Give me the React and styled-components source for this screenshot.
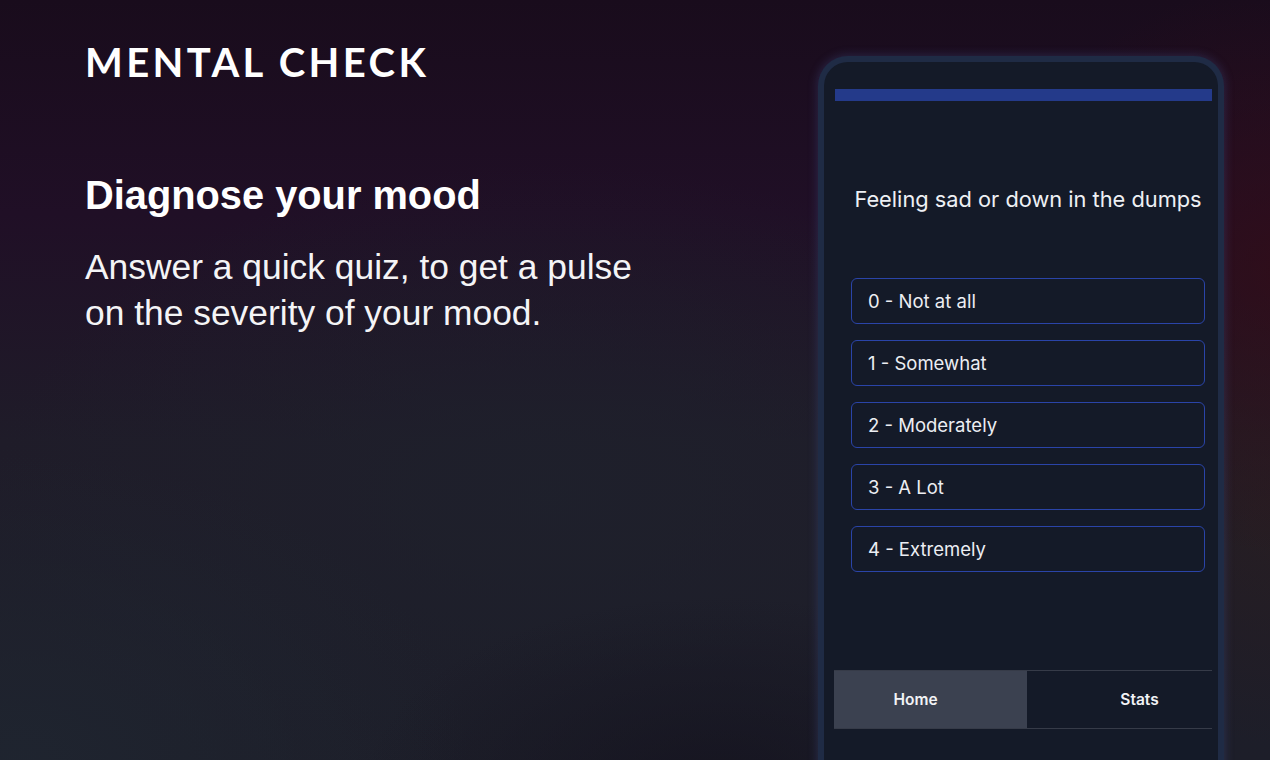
import React from "react";
import styled, { createGlobalStyle } from "styled-components";

const GlobalStyle = createGlobalStyle`
  html, body {
    margin: 0;
    padding: 0;
    height: 100%;
    overflow: hidden;
  }
  #root {
    height: 100%;
  }
`;

const Page = styled.div`
  width: 1270px;
  height: 760px;
  overflow: hidden;
  display: flex;
  justify-content: space-between;
  background:
    radial-gradient(ellipse 420px 380px at 1290px 270px, rgba(52, 12, 22, 0.75), transparent 75%),
    radial-gradient(ellipse 380px 300px at 1300px 520px, rgba(44, 30, 30, 0.6), transparent 75%),
    radial-gradient(ellipse 560px 380px at 20px 760px, rgba(31, 37, 48, 0.9), transparent 80%),
    radial-gradient(ellipse 480px 260px at 720px 790px, rgba(20, 18, 30, 0.8), transparent 75%),
    radial-gradient(ellipse 700px 420px at 550px 500px, rgba(30, 33, 44, 0.8), transparent 80%),
    linear-gradient(180deg, #190c1c 0%, #200f26 28%, #1f1c29 58%, #1d1e29 100%);
  color: #fff;
`;

const Intro = styled.section`
  padding: 40px 0 0 85px;
  display: flex;
  flex-direction: column;
`;

const Logo = styled.h1`
  margin: 0;
  font-family: Lato, "Open Sans", sans-serif;
  font-weight: 700;
  font-size: 40px;
  letter-spacing: 3.4px;
  line-height: 44px;
  color: #fff;
`;

const Headline = styled.h2`
  margin: 87px 0 0;
  font-family: "Liberation Sans", Arial, sans-serif;
  font-weight: 700;
  font-size: 39.8px;
  line-height: 48px;
`;

const Lead = styled.p`
  margin: 25px 0 0;
  width: 570px;
  font-family: "Liberation Sans", Arial, sans-serif;
  font-size: 35.4px;
  line-height: 46px;
  color: #f4f4f6;
`;

const PhoneWrap = styled.div`
  padding: 56px 46px 0 0;
`;

const Phone = styled.div`
  width: 378px;
  height: 760px;
  border: 6px solid #1f2b45;
  border-bottom: none;
  border-radius: 30px 30px 0 0;
  background: #141a28;
  box-shadow: 0 0 8px 2px rgba(70, 80, 140, 0.3);
  padding: 27px 6px 0 10px;
  display: flex;
  flex-direction: column;
  font-family: Inter, "Noto Sans", sans-serif;
`;

const Progress = styled.div`
  height: 12px;
  margin-left: 1px;
  background: #243a8a;
`;

const Question = styled.p`
  margin: 85px 7px 0 17px;
  text-align: center;
  font-size: 21.8px;
  line-height: 26px;
  color: #eef0f4;
`;

const Options = styled.div`
  margin: 66px 7px 0 17px;
  display: flex;
  flex-direction: column;
  gap: 16px;
`;

const Option = styled.button`
  height: 46px;
  border: 1px solid #2a44a8;
  border-radius: 6px;
  background: transparent;
  padding: 0 0 0 16px;
  text-align: left;
  font-family: Inter, "Noto Sans", sans-serif;
  font-size: 18.5px;
  color: #eceef3;
`;

const TabBar = styled.nav`
  margin-top: 98px;
  display: flex;
  height: 57px;
  border-top: 1px solid #363b48;
  border-bottom: 1px solid #363b48;
`;

const Tab = styled.div`
  box-sizing: border-box;
  flex: ${(p) => p.$flex};
  display: flex;
  align-items: center;
  justify-content: center;
  padding: ${(p) => p.$pad};
  background: ${(p) => (p.$active ? "#3b4150" : "transparent")};
  font-size: 15.5px;
  font-weight: 600;
  color: #f2f3f6;
`;

const answers = [
  "0 - Not at all",
  "1 - Somewhat",
  "2 - Moderately",
  "3 - A Lot",
  "4 - Extremely",
];

export default function App() {
  return (
    <>
      <GlobalStyle />
      <Page>
        <Intro>
          <Logo>MENTAL CHECK</Logo>
          <Headline>Diagnose your mood</Headline>
          <Lead>Answer a quick quiz, to get a pulse on the severity of your mood.</Lead>
        </Intro>
        <PhoneWrap>
          <Phone>
            <Progress />
            <Question>Feeling sad or down in the dumps</Question>
            <Options>
              {answers.map((a) => (
                <Option key={a}>{a}</Option>
              ))}
            </Options>
            <TabBar>
              <Tab $active $flex="0 0 193px" $pad="0 30px 0 0">Home</Tab>
              <Tab $flex="1" $pad="0 0 0 40px">Stats</Tab>
            </TabBar>
          </Phone>
        </PhoneWrap>
      </Page>
    </>
  );
}
